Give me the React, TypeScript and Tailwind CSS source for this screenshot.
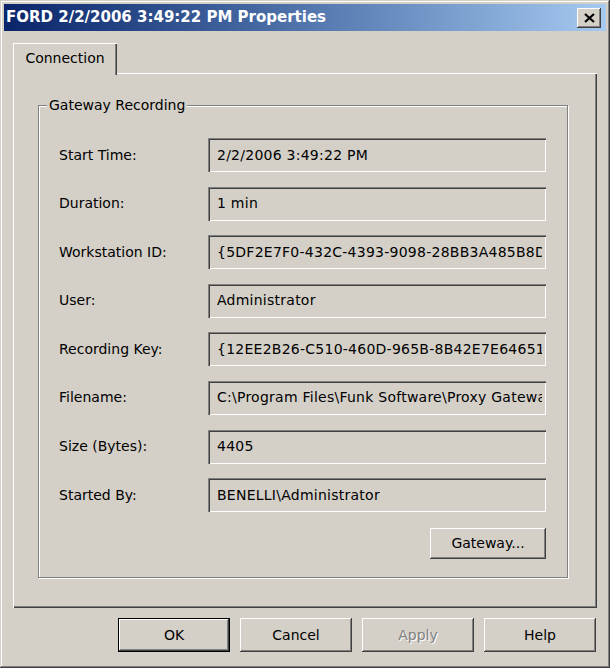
import React from 'react';

const fields = [
    {label: 'Start Time:', value: '2/2/2006 3:49:22 PM'},
    {label: 'Duration:', value: '1 min'},
    {label: 'Workstation ID:', value: '{5DF2E7F0-432C-4393-9098-28BB3A485B8D}'},
    {label: 'User:', value: 'Administrator'},
    {label: 'Recording Key:', value: '{12EE2B26-C510-460D-965B-8B42E7E64651}'},
    {label: 'Filename:', value: 'C:\\Program Files\\Funk Software\\Proxy Gateway'},
    {label: 'Size (Bytes):', value: '4405'},
    {label: 'Started By:', value: 'BENELLI\\Administrator'},
];

// classic 3D bevels
const raised = 'shadow-[inset_-1px_-1px_#404040,inset_1px_1px_#ffffff,inset_-2px_-2px_#808080]';
const sunken = 'shadow-[inset_1px_1px_#808080,inset_2px_2px_#404040,inset_-1px_-1px_#ffffff]';

function DialogButton({children, isDefault, disabled}: {children: React.ReactNode; isDefault?: boolean; disabled?: boolean}) {
    return (
        <button
            type="button"
            className={
                'w-[112px] h-[34px] flex items-center justify-center bg-[#d4d0c8] text-[14px] ' +
                (isDefault ? 'border border-black shadow-[inset_-1px_-1px_#404040,inset_1px_1px_#ffffff,inset_-2px_-2px_#808080] ' : raised + ' ') +
                (disabled ? 'text-[#808080] [text-shadow:1px_1px_#ffffff]' : 'text-black')
            }
        >
            {children}
        </button>
    );
}

export default function App() {
    return (
        <div
            className="w-[610px] h-[668px] bg-[#d4d0c8] p-[4px] flex flex-col font-['DejaVu_Sans',sans-serif] text-black shadow-[inset_-1px_-1px_#404040,inset_1px_1px_#d4d0c8,inset_-2px_-2px_#808080,inset_2px_2px_#ffffff]">
            {/* Title bar */}
            <div className="h-[27px] flex items-center justify-between bg-gradient-to-r from-[#0a246a] to-[#a6caf0] pl-[2px] pr-[5px]">
                <span className="text-white font-bold text-[15px] leading-none whitespace-nowrap">
                    FORD 2/2/2006 3:49:22 PM Properties
                </span>
                <button type="button" className={'w-[24px] h-[20px] bg-[#d4d0c8] flex items-center justify-center ' + raised}>
                    <svg width="11" height="10" viewBox="0 0 11 10">
                        <path d="M1 1 L10 9 M10 1 L1 9" stroke="#000" strokeWidth="2.2"/>
                    </svg>
                </button>
            </div>

            {/* Tab strip */}
            <div className="flex pl-[9px] mt-[12px]">
                <div
                    className="relative z-10 w-[104px] h-[32px] -mb-[2px] pb-[2px] bg-[#d4d0c8] flex items-center justify-center text-[14px] shadow-[inset_1px_1px_#ffffff,inset_-1px_0_#404040,inset_-2px_0_#808080]">
                    Connection
                </div>
            </div>

            {/* Tab page */}
            <div
                className="ml-[9px] w-[584px] h-[535px] pt-[32px] pl-[25px] shadow-[inset_1px_1px_#ffffff,inset_-1px_-1px_#404040,inset_-2px_-2px_#808080]">
                <div className="relative w-[530px] h-[473px] border border-[#808080] shadow-[inset_1px_1px_#ffffff,1px_1px_#ffffff]">
                    <span className="absolute left-[8px] -top-[10px] px-[2px] bg-[#d4d0c8] text-[14px] leading-[18px]">
                        Gateway Recording
                    </span>

                    <div className="flex flex-col pt-[32px] pl-[20px] w-[507px]">
                        <div className="flex flex-col gap-y-[14.6px]">
                            {fields.map(f => (
                                <div key={f.label} className="flex items-center h-[34px]">
                                    <span className="w-[149px] text-[14px] whitespace-nowrap">{f.label}</span>
                                    <div className={'w-[338px] h-[34px] flex items-center pl-[9px] pr-[4px] overflow-hidden ' + sunken}>
                                        <span className="text-[14px] tracking-[0.25px] whitespace-nowrap overflow-hidden">{f.value}</span>
                                    </div>
                                </div>
                            ))}
                        </div>
                        <div className="flex justify-end w-[487px] mt-[16px]">
                            <button type="button"
                                    className={'w-[116px] h-[31px] bg-[#d4d0c8] text-[14px] flex items-center justify-center ' + raised}>
                                Gateway...
                            </button>
                        </div>
                    </div>
                </div>
            </div>

            {/* Dialog buttons */}
            <div className="flex gap-[10px] ml-[114px] mt-[10px]">
                <DialogButton isDefault>OK</DialogButton>
                <DialogButton>Cancel</DialogButton>
                <DialogButton disabled>Apply</DialogButton>
                <DialogButton>Help</DialogButton>
            </div>
        </div>
    );
}
